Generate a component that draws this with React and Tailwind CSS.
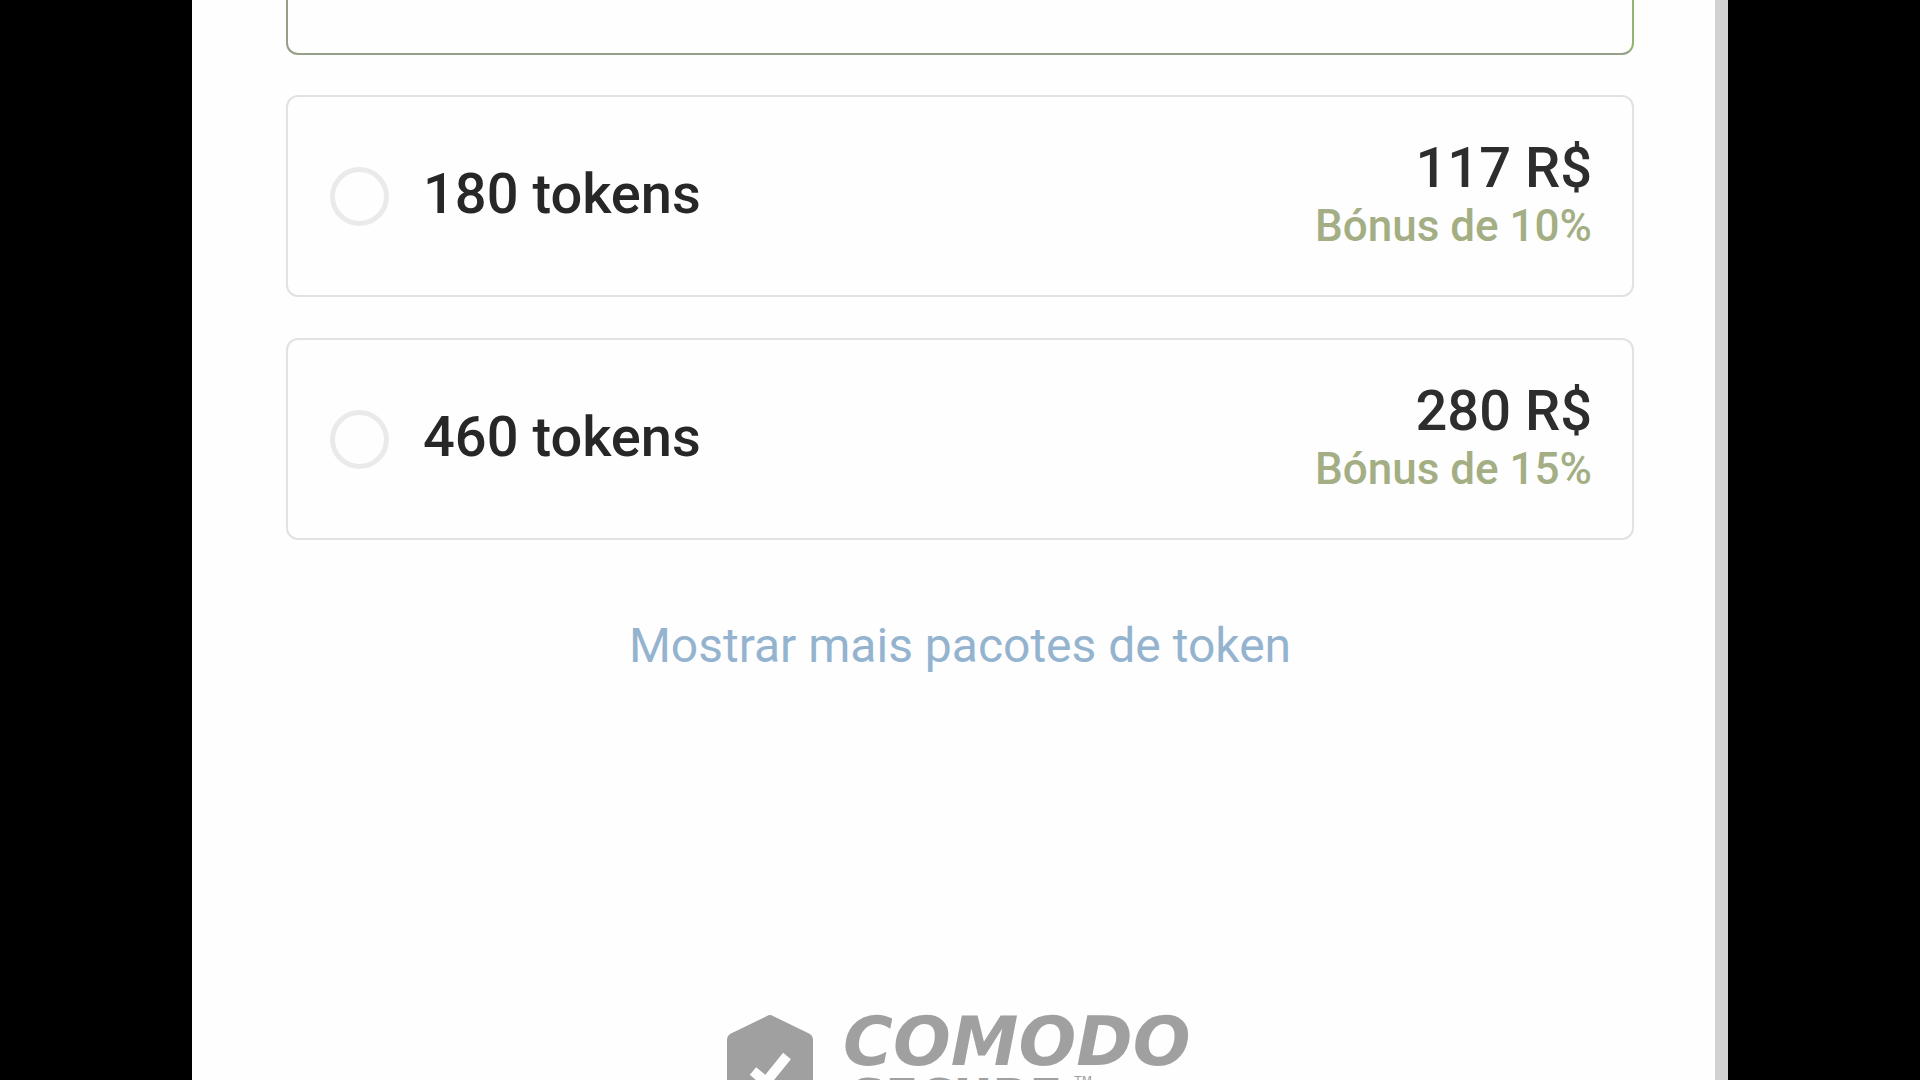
import { useState } from "react";

const packages = [
  { id: "p180", tokens: 180, price: 117, bonus: 10 },
  { id: "p460", tokens: 460, price: 280, bonus: 15 },
];

function PackageCard({ pack, checked, onSelect }) {
  return (
    <label
      htmlFor={pack.id}
      className="flex items-center min-h-[202px] pl-[42px] pr-10 rounded-xl border-2 border-[#e2e2e2] cursor-pointer"
    >
      <input
        id={pack.id}
        type="radio"
        name="package"
        value={pack.tokens}
        checked={checked}
        onChange={onSelect}
        className="appearance-none shrink-0 w-[59px] h-[59px] rounded-full border-[5px] border-[#eaeaea] checked:border-[#8fb56f]"
      />
      <span className="ml-[34px] pb-1 text-[56px] leading-16 font-medium text-[#272727]">
        {pack.tokens} tokens
      </span>
      <span className="ml-auto pb-1 flex flex-col text-right font-medium">
        <span className="text-[56px] leading-16 text-[#2d2d2d]">{pack.price} R$</span>
        <span className="text-[44px] leading-[52px] text-[#a4ae84]">
          Bónus de {pack.bonus}%
        </span>
      </span>
    </label>
  );
}

function ComodoBadge() {
  return (
    <div className="flex justify-center gap-[30px] text-[#a0a0a0]">
      <svg viewBox="0 0 86 100" className="w-[86px] h-[100px] shrink-0" aria-hidden="true">
        <path
          d="M40 1Q43 -1 46 1L83 19Q86 21 86 24V68Q86 72 83 74L46 98Q43 100 40 98L3 74Q0 72 0 68V24Q0 21 3 19Z"
          fill="currentColor"
        />
        <path
          d="M26 56L39 67L60 41"
          fill="none"
          stroke="#fefefe"
          strokeWidth="10"
          strokeLinejoin="round"
        />
      </svg>
      <div className="min-w-[350px] font-['DejaVu_Sans'] font-bold">
        <p className="text-[68px] leading-[54px] italic">COMODO</p>
        <p className="flex items-start pl-2 text-[48px] leading-[54px]">
          SECURE<span className="ml-3 text-[12px] leading-6 font-normal">TM</span>
        </p>
      </div>
    </div>
  );
}

export default function App() {
  const [selected, setSelected] = useState("");

  return (
    <div className="h-screen overflow-hidden bg-black font-[Roboto,sans-serif]">
      <div className="flex h-full mx-[10%] bg-[#fefefe]">
        <main className="flex-1 pl-[94px] pr-[81px]">
          <div className="h-[55px] mb-10 rounded-b-xl border-2 border-t-0 border-[#95a086] border-r-[#8fb56f]" />
          <div className="flex flex-col gap-[41px]">
            {packages.map((pack) => (
              <PackageCard
                key={pack.id}
                pack={pack}
                checked={selected === pack.id}
                onSelect={() => setSelected(pack.id)}
              />
            ))}
          </div>

          <div className="mt-[77px] mb-[340px] text-center">
            <button type="button" className="text-[48px] leading-[58px] text-[#94b3cf]">
              Mostrar mais pacotes de token
            </button>
          </div>

          <ComodoBadge />
        </main>

        {/* scrollbar track */}
        <div className="w-[13px] shrink-0 bg-[#d2d2d2]" />
      </div>
    </div>
  );
}
